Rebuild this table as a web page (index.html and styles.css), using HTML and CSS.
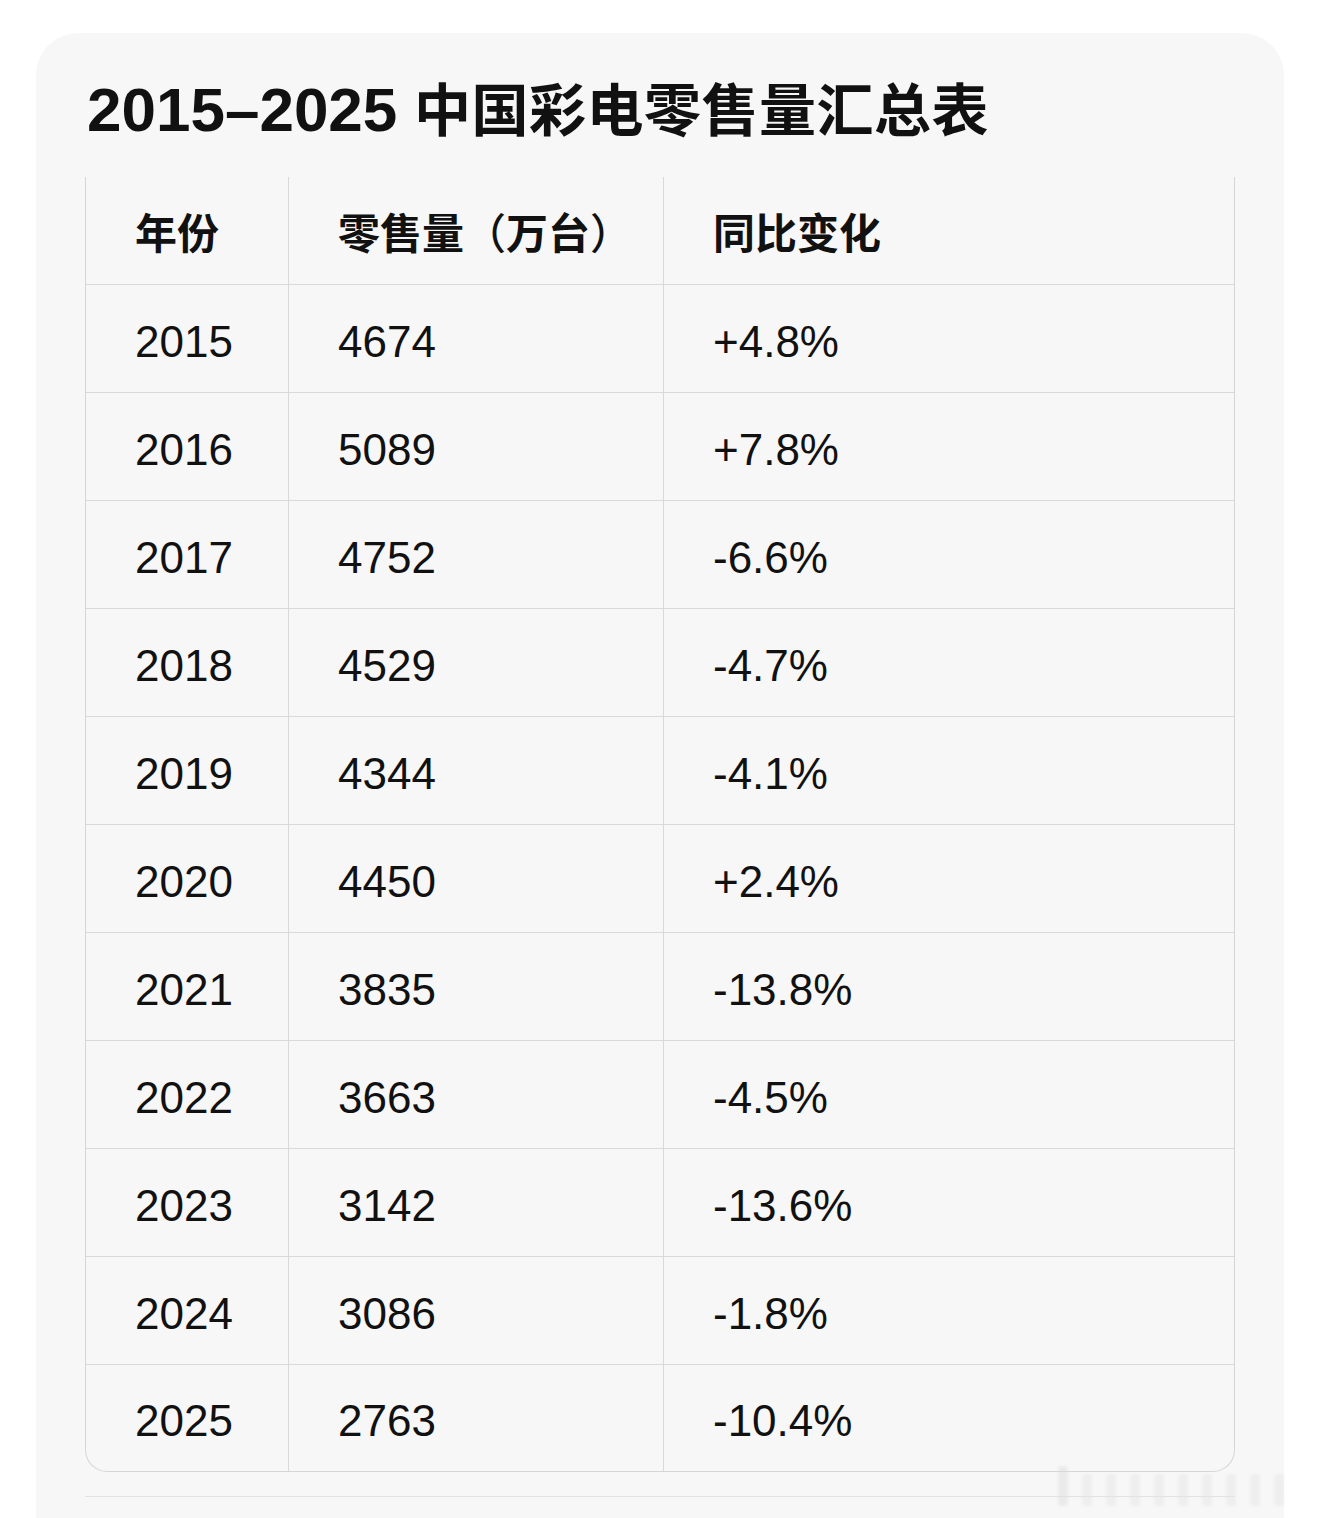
FILE: index.html
```html
<!DOCTYPE html>
<html lang="zh-CN">
<head>
<meta charset="utf-8">
<title>2015–2025 中国彩电零售量汇总表</title>
<link rel="stylesheet" href="styles.css">
</head>
<body>
<div class="card">
  <h1 class="title"><span class="title-num">2015–2025</span> <span class="title-zh">中国彩电零售量汇总表</span></h1>
  <table class="data">
    <colgroup>
      <col class="c1"><col class="c2"><col class="c3">
    </colgroup>
    <thead>
      <tr><th>年份</th><th>零售量<span class="paren">（</span>万台<span class="paren">）</span></th><th>同比变化</th></tr>
    </thead>
    <tbody>
      <tr><td>2015</td><td>4674</td><td>+4.8%</td></tr>
      <tr><td>2016</td><td>5089</td><td>+7.8%</td></tr>
      <tr><td>2017</td><td>4752</td><td>-6.6%</td></tr>
      <tr><td>2018</td><td>4529</td><td>-4.7%</td></tr>
      <tr><td>2019</td><td>4344</td><td>-4.1%</td></tr>
      <tr><td>2020</td><td>4450</td><td>+2.4%</td></tr>
      <tr><td>2021</td><td>3835</td><td>-13.8%</td></tr>
      <tr><td>2022</td><td>3663</td><td>-4.5%</td></tr>
      <tr><td>2023</td><td>3142</td><td>-13.6%</td></tr>
      <tr><td>2024</td><td>3086</td><td>-1.8%</td></tr>
      <tr><td>2025</td><td>2763</td><td>-10.4%</td></tr>
    </tbody>
  </table>
  <div class="rule"></div>
  <div class="watermark" aria-hidden="true">
    <span class="wm-bar wm-tall"></span><span class="wm-bar"></span><span class="wm-bar"></span><span class="wm-bar"></span><span class="wm-bar"></span><span class="wm-bar"></span><span class="wm-bar"></span><span class="wm-bar"></span><span class="wm-bar"></span><span class="wm-bar"></span>
  </div>
</div>
</body>
</html>
```
FILE: styles.css
```css
html, body {
  margin: 0;
  padding: 0;
  background: #ffffff;
}
body {
  font-family: "Liberation Sans", "Noto Sans CJK SC", sans-serif;
  color: #111111;
}
.card {
  position: relative;
  margin: 33px 36px 0 36px;
  background: #f7f7f7;
  border-radius: 42px 42px 0 0;
  padding: 41px 49px 0 49px;
  min-height: 1485px;
  box-sizing: border-box;
}
.title {
  margin: 0 0 31px 2px;
  font-size: 60px;
  line-height: 72px;
  height: 72px;
  font-weight: 700;
  white-space: nowrap;
}
.title-num {
  font-size: 62px;
}
.title-zh {
  font-size: 57px;
  letter-spacing: 0.5px;
}
.data {
  width: 1150px;
  border-collapse: separate;
  border-spacing: 0;
  border: 1px solid #d6d6d6;
  border-top: none;
  border-radius: 0 0 22px 22px;
  table-layout: fixed;
}
.c1 { width: 202px; }
.c2 { width: 375px; }
.data th, .data td {
  height: 108px;
  padding: 0 0 0 49px;
  text-align: left;
  vertical-align: middle;
  border-bottom: 1px solid #d9d9d9;
  box-sizing: border-box;
}
.data th + th, .data td + td {
  border-left: 1px solid #d9d9d9;
}
.data tbody tr:last-child td {
  border-bottom: none;
  height: 106px;
}
.data th {
  font-size: 42px;
  font-weight: 700;
}
.paren {
  font-family: "Noto Sans CJK SC", sans-serif;
  font-weight: 500;
}
.data td {
  font-size: 44px;
  font-weight: 400;
  padding-top: 6px;
}
.rule {
  margin-top: 24px;
  width: 1150px;
  height: 1px;
  background: #e2e2e2;
}
.watermark {
  position: absolute;
  left: 1022px;
  top: 1433px;
  width: 260px;
  height: 40px;
  display: flex;
  gap: 14px;
  align-items: flex-end;
  filter: blur(1.5px);
  opacity: 0.45;
}
.wm-bar {
  width: 10px;
  height: 32px;
  background: #e4e4e4;
  border-radius: 3px;
}
.wm-tall {
  height: 40px;
  background: #dcdcdc;
}
```
